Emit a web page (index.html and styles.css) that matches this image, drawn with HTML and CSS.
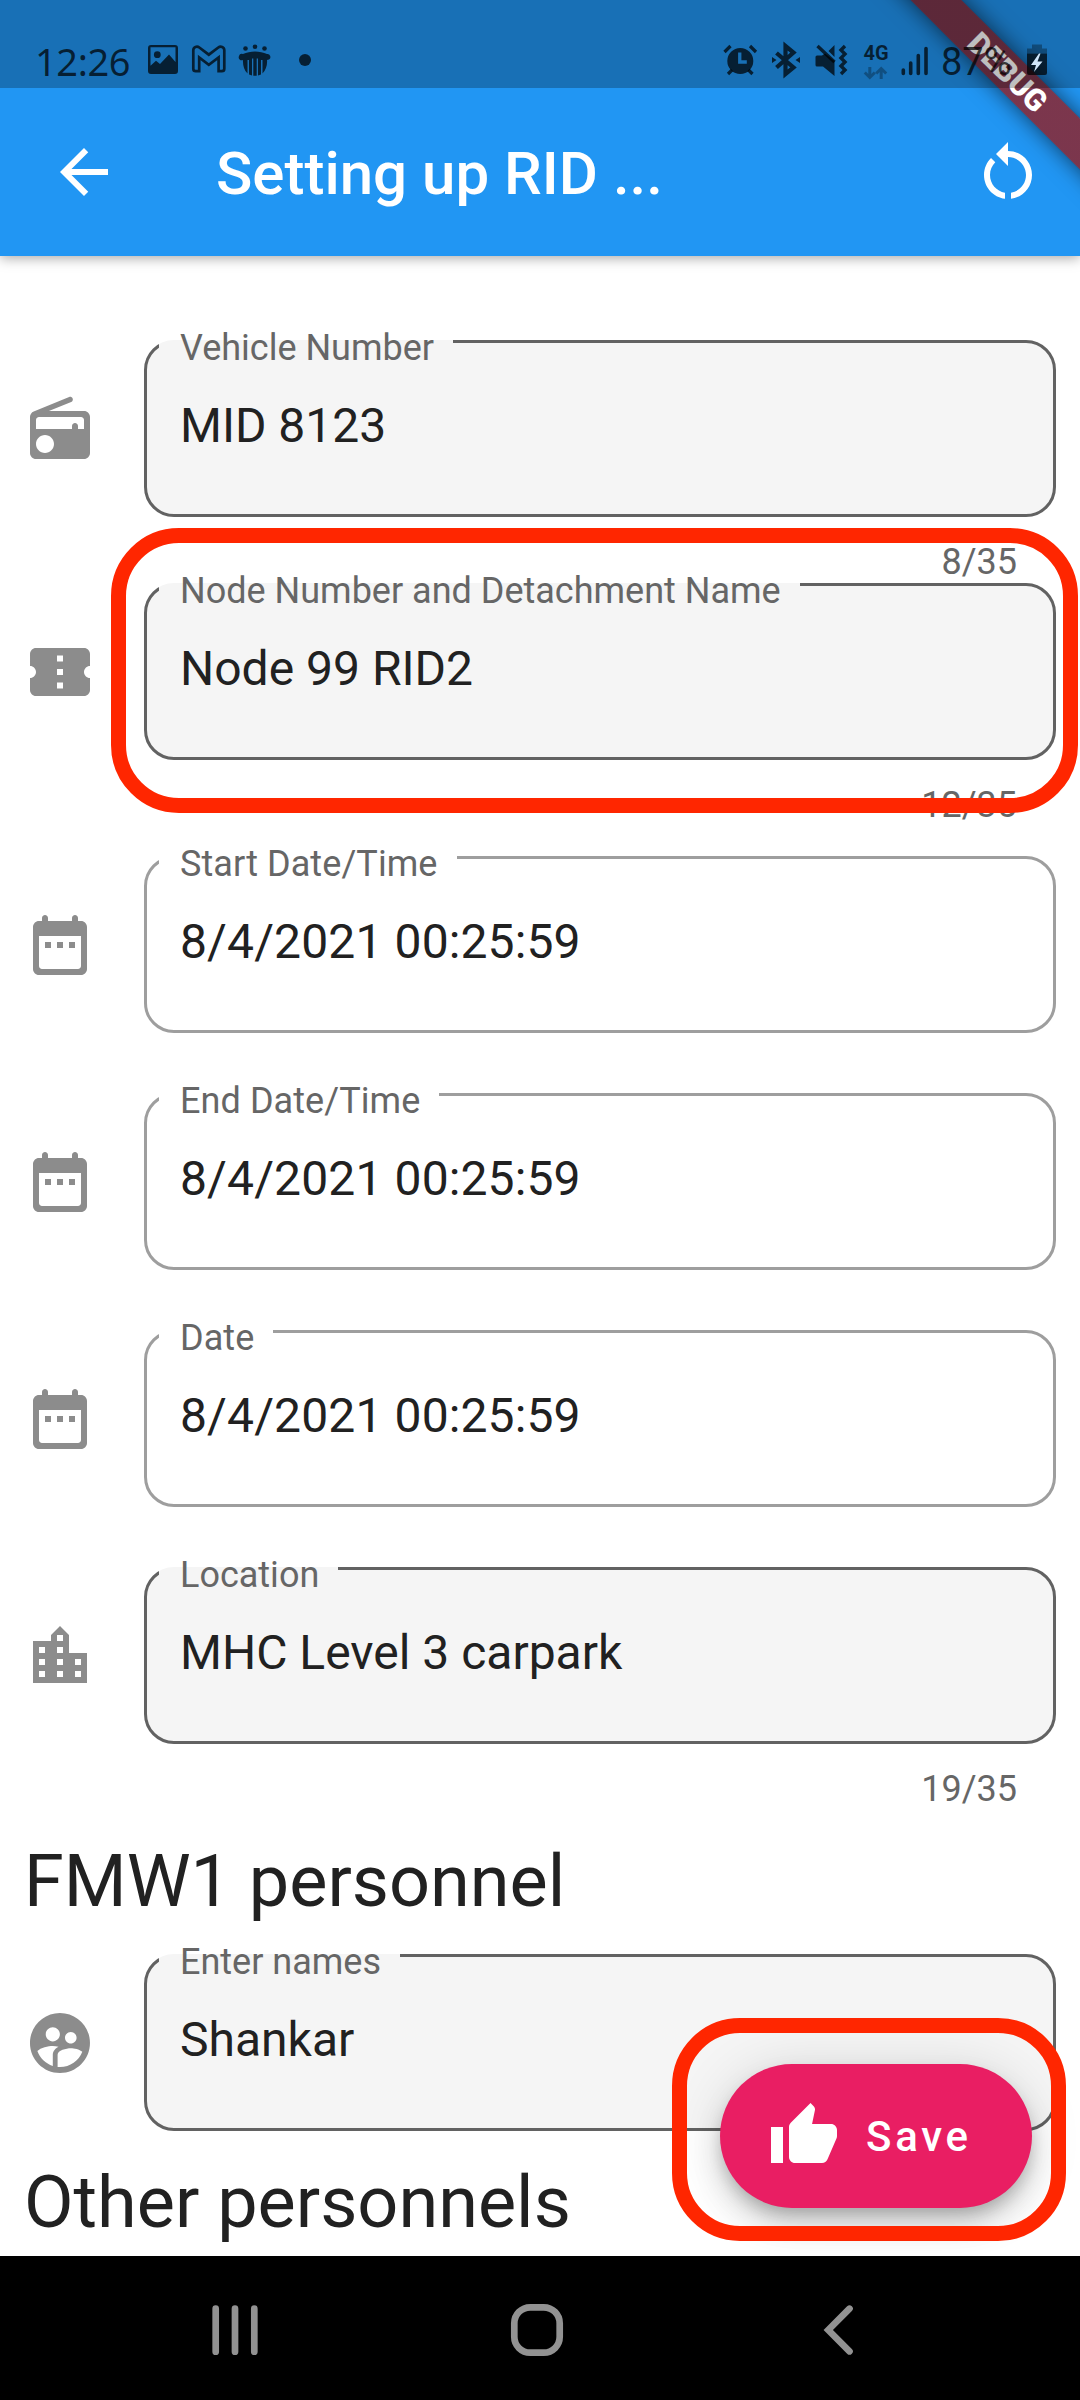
FILE: index.html
```html
<!DOCTYPE html>
<html lang="en">
<head>
<meta charset="utf-8">
<title>Setting up RID</title>
<link rel="stylesheet" href="styles.css">
</head>
<body>
<div class="screen">
  <header class="appbar">
    <svg class="icon" viewBox="0 0 24 24"><path d="M20 11H7.83l5.59-5.59L12 4l-8 8 8 8 1.41-1.41L7.83 13H20v-2z"/></svg>
    <h1 class="appbar-title">Setting up RID ...</h1>
    <svg class="icon" viewBox="0 0 24 24"><path d="M12 5V2L8 6l4 4V7c3.31 0 6 2.69 6 6 0 2.97-2.17 5.43-5 5.91v2.02c3.95-.49 7-3.85 7-7.93 0-4.42-3.58-8-8-8zm-6 8c0-1.65.67-3.15 1.76-4.24L6.34 7.34C4.9 8.79 4 10.79 4 13c0 4.08 3.05 7.44 7 7.93v-2.02c-2.83-.48-5-2.94-5-5.91z"/></svg>
  </header>

  <main class="form">
    <div class="row row-counted">
      <svg class="icon" viewBox="0 0 24 24"><path d="M3.24 6.15C2.51 6.43 2 7.17 2 8v12c0 1.1.89 2 2 2h16c1.1 0 2-.9 2-2V8c0-1.1-.9-2-2-2H8.3l7.43-3c.46-.19.68-.71.49-1.17-.19-.46-.71-.68-1.17-.49L3.24 6.15zM7 20c-1.66 0-3-1.34-3-3s1.34-3 3-3 3 1.34 3 3-1.34 3-3 3zm13-8h-2v-1c0-.55-.45-1-1-1s-1 .45-1 1v1H4V9c0-.55.45-1 1-1h14c.55 0 1 .45 1 1v3z"/></svg>
      <div class="field">
        <fieldset class="box filled"><legend>Vehicle Number</legend><div class="value">MID 8123</div></fieldset>
        <div class="counter">8/35</div>
      </div>
    </div>
    <div class="row row-counted-last">
      <svg class="icon" viewBox="0 0 24 24"><path d="M22 10V6c0-1.11-.9-2-2-2H4c-1.1 0-1.99.89-1.99 2v4c1.1 0 1.99.9 1.99 2s-.89 2-2 2v4c0 1.1.9 2 2 2h16c1.1 0 2-.9 2-2v-4c-1.1 0-2-.9-2-2s.9-2 2-2zm-9 7.5h-2v-2h2v2zm0-4.5h-2v-2h2v2zm0-4.5h-2v-2h2v2z"/></svg>
      <div class="field">
        <fieldset class="box filled"><legend>Node Number and Detachment Name</legend><div class="value">Node 99 RID2</div></fieldset>
        <div class="counter">12/35</div>
      </div>
    </div>
    <div class="row row-date">
      <svg class="icon" viewBox="0 0 24 24"><path fill-rule="evenodd" d="M19 4h-1V3c0-.55-.45-1-1-1s-1 .45-1 1v1H8V3c0-.55-.45-1-1-1s-1 .45-1 1v1H5c-1.1 0-2 .9-2 2v14c0 1.1.9 2 2 2h14c1.1 0 2-.9 2-2V6c0-1.1-.9-2-2-2zm0 15c0 .55-.45 1-1 1H6c-.55 0-1-.45-1-1V9h14v10zM7 11h2v2H7zm4 0h2v2h-2zm4 0h2v2h-2z"/></svg>
      <div class="field"><fieldset class="box"><legend>Start Date/Time</legend><div class="value">8/4/2021 00:25:59</div></fieldset></div>
    </div>
    <div class="row row-date">
      <svg class="icon" viewBox="0 0 24 24"><path fill-rule="evenodd" d="M19 4h-1V3c0-.55-.45-1-1-1s-1 .45-1 1v1H8V3c0-.55-.45-1-1-1s-1 .45-1 1v1H5c-1.1 0-2 .9-2 2v14c0 1.1.9 2 2 2h14c1.1 0 2-.9 2-2V6c0-1.1-.9-2-2-2zm0 15c0 .55-.45 1-1 1H6c-.55 0-1-.45-1-1V9h14v10zM7 11h2v2H7zm4 0h2v2h-2zm4 0h2v2h-2z"/></svg>
      <div class="field"><fieldset class="box"><legend>End Date/Time</legend><div class="value">8/4/2021 00:25:59</div></fieldset></div>
    </div>
    <div class="row row-date">
      <svg class="icon" viewBox="0 0 24 24"><path fill-rule="evenodd" d="M19 4h-1V3c0-.55-.45-1-1-1s-1 .45-1 1v1H8V3c0-.55-.45-1-1-1s-1 .45-1 1v1H5c-1.1 0-2 .9-2 2v14c0 1.1.9 2 2 2h14c1.1 0 2-.9 2-2V6c0-1.1-.9-2-2-2zm0 15c0 .55-.45 1-1 1H6c-.55 0-1-.45-1-1V9h14v10zM7 11h2v2H7zm4 0h2v2h-2zm4 0h2v2h-2z"/></svg>
      <div class="field"><fieldset class="box"><legend>Date</legend><div class="value">8/4/2021 00:25:59</div></fieldset></div>
    </div>
    <div class="row row-location">
      <svg class="icon" viewBox="0 0 24 24"><path d="M15 11V5l-3-3-3 3v2H3v14h18V11h-6zm-8 8H5v-2h2v2zm0-4H5v-2h2v2zm0-4H5V9h2v2zm6 8h-2v-2h2v2zm0-4h-2v-2h2v2zm0-4h-2V9h2v2zm0-4h-2V5h2v2zm6 12h-2v-2h2v2zm0-4h-2v-2h2v2z"/></svg>
      <div class="field">
        <fieldset class="box filled"><legend>Location</legend><div class="value">MHC Level 3 carpark</div></fieldset>
        <div class="counter">19/35</div>
      </div>
    </div>
    <h2 class="section">FMW1 personnel</h2>
    <div class="row row-names">
      <svg class="icon" viewBox="0 0 24 24"><path d="M11.99 2c-5.52 0-10 4.48-10 10s4.48 10 10 10 10-4.48 10-10-4.48-10-10-10zm3.61 6.34c1.07 0 1.93.86 1.93 1.93 0 1.07-.86 1.93-1.93 1.93-1.07 0-1.93-.86-1.93-1.93-.01-1.07.86-1.93 1.93-1.93zm-6-1.58c1.3 0 2.36 1.06 2.36 2.36 0 1.3-1.06 2.36-2.36 2.36s-2.36-1.06-2.36-2.36c0-1.31 1.05-2.36 2.36-2.36zm0 9.13v3.75c-2.4-.75-4.3-2.6-5.14-4.96 1.05-1.12 3.67-1.69 5.14-1.69.53 0 1.2.08 1.9.22-1.64.87-1.9 2.02-1.9 2.68zM11.99 20c-.27 0-.53-.01-.79-.04v-4.07c0-1.42 2.94-2.13 4.4-2.13 1.07 0 2.92.39 3.84 1.15-1.17 2.97-4.06 5.09-7.45 5.09z"/></svg>
      <div class="field"><fieldset class="box filled"><legend>Enter names</legend><div class="value">Shankar</div></fieldset></div>
    </div>
    <h2 class="section">Other personnels</h2>
  </main>

  <nav class="navbar">
    <svg class="nav-recents" viewBox="0 0 52 60"><path d="M6.7 8.7v43M26 8.7v43M45.3 8.7v43"/></svg>
    <svg class="nav-home" viewBox="0 0 60 60"><rect x="7.3" y="7.3" width="45.4" height="45.4" rx="16"/></svg>
    <svg class="nav-back" viewBox="0 0 40 60"><path d="M30.5 8.7 9.3 30l21.2 21.3"/></svg>
  </nav>

  <button class="fab">
    <svg class="icon" viewBox="0 0 24 24"><path d="M1 21h4V9H1v12zm22-11c0-1.1-.9-2-2-2h-6.31l.95-4.57.03-.32c0-.41-.17-.79-.44-1.06L14.17 1 7.59 7.59C7.22 7.95 7 8.45 7 9v10c0 1.1.9 2 2 2h9c.83 0 1.54-.5 1.84-1.22l3.02-7.05c.09-.23.14-.47.14-.73v-2z"/></svg>
    <span>Save</span>
  </button>

  <div class="ribbon-corner"><div class="ribbon">DEBUG</div></div>

  <div class="statusbar">
    <span class="time">12:26</span>
    <svg width="45" height="50" viewBox="140 36 45 50"><path fill-rule="evenodd" d="M151 45h24a3 3 0 0 1 3 3v23a3 3 0 0 1-3 3h-24a3 3 0 0 1-3-3V48a3 3 0 0 1 3-3zm-.5 2.300v18.500l5.500-5 4 3.200 9-9.500 6.500 7.500V47.300z"/><circle cx="157.300" cy="54.700" r="3.400"/></svg>
    <svg class="line" width="47" height="50" viewBox="185 36 47 50"><path stroke-width="2.700" d="M193.300 50.200v18.500q0 2.500 2.500 2.500h3.400V57.500l9.600 7.400 9.800-7.400v13.700h3.200q2.500 0 2.500-2.500V50.200c0-3.400-3.800-4.400-6-2.700l-9.500 7.200-9.500-7.200c-2.200-1.700-6-.7-6 2.700z"/></svg>
    <svg width="46" height="50" viewBox="232 36 46 50"><circle cx="245.500" cy="48.500" r="2.300"/><circle cx="255" cy="46.800" r="2.300"/><circle cx="264.500" cy="48.500" r="2.300"/><path d="M239 56a3 3 0 0 1 4-2c7-3.500 17-3.500 24 0a3 3 0 0 1 2 5.500l-2 .5c.5 5-1 10-4.500 13.500V60h-1.500v14.500l-3 1V58.500h-1.300v17.300h-3.400V58.500H252v17l-3-1V60h-1.500v13.500C244 70 242.700 65 243 60a3 3 0 0 1-4-4z"/></svg>
    <svg width="42" height="50" viewBox="278 36 42 50"><circle cx="305" cy="60" r="6"/></svg>
    <svg class="status-end" width="44" height="50" viewBox="718 36 44 50"><path fill-rule="evenodd" d="M740.300 48a13 13 0 1 1 0 26 13 13 0 0 1 0-26zm-2.200 4.500v11.300h8.700v-3.600h-5.400v-7.700z"/><path class="stroke" stroke-width="3.200" d="m724.500 52 6-6m25.500 6-6-6M732 70l-4 4m20.500-4 4 4"/></svg>
    <svg width="46" height="50" viewBox="762 36 46 50"><path class="stroke" stroke-width="4.200" d="m776.500 53 17 14.500-8 6.500V46l8 6.500-17 15"/><path d="m772 57 4.500 3-4.500 3zM800 57l-4.500 3 4.500 3z"/></svg>
    <svg width="48" height="50" viewBox="808 36 48 50"><path d="M815.500 57q0-1.500 1.500-1.500h5l3-2L834.500 61v15L823 66.500h-6q-1.500 0-1.500-1.500zM828.500 51l6-6v12z"/><path class="stroke" stroke-width="3.400" d="m817.500 46 17 16M845 46l-4 4 4 4-4 4 4 4-4 4 4 4-4 4"/></svg>
    <span class="network"><b>4G</b><svg width="40" height="18" viewBox="0 0 40 18"><path d="M13.800 2v10m-5-4.500 5 5 5-5M25.200 14V4m-5 4.500 5-5 5 5"/></svg></span>
    <svg class="bars" width="40" height="50" viewBox="896 36 40 50"><path d="M903.300 70v3.500M910.700 63v10.500M918.300 55.500v18M926 48.500v25"/></svg>
    <span class="percent">87%</span>
    <svg width="32" height="50" viewBox="1022 36 32 50"><path opacity=".45" d="M1032 44.500h10v4h5v5h-20v-5h5z"/><path d="M1027 53.500h20V73q0 2-2 2h-16q-2 0-2-2z"/><path fill="#cfe6fa" d="m1039 53.500-8 11.500h5l-2 7 8.500-10.500h-5l3-8z"/></svg>
  </div>

  <div class="mark mark-node"></div>
  <div class="mark mark-save"></div>
</div>
</body>
</html>
```
FILE: styles.css
```css
* { box-sizing: border-box; }

body {
  margin: 0;
  background: #fff;
  font-family: Roboto, sans-serif;
  color: #212121;
}

.screen {
  position: relative;
  display: flex;
  flex-direction: column;
  width: 1080px;
  height: 2400px;
  overflow: hidden;
}

.icon {
  flex: none;
  width: 72px;
  height: 72px;
  fill: currentColor;
}

/* App bar */
.appbar {
  flex: none;
  display: flex;
  align-items: center;
  height: 256px;
  padding: 88px 36px 0 48px;
  background: #2196f3;
  color: #fff;
  box-shadow: 0 2px 12px rgba(0, 0, 0, .35);
}

.appbar-title {
  flex: 1;
  margin: 0 0 0 96px;
  padding-top: 3px;
  font-size: 60px;
  font-weight: 500;
  line-height: 84px;
}

/* Form */
.form {
  flex: 1;
  min-height: 0;
  padding: 84px 24px 0;
}

.row {
  display: flex;
  align-items: flex-start;
  gap: 48px;
  height: 237px;
}

.row-counted { height: 243px; }
.row-counted-last { height: 273px; }
.row-location { height: 264px; }
.row-names { height: 198px; }

.row .icon {
  margin-top: 52.5px;
  color: #8c8c8c;
}

.field {
  flex: 1;
  min-width: 0;
}

.box {
  height: 182px;
  margin: -5px 0 0;
  padding: 0 0 0 33px;
  border: 3px solid #9e9e9e;
  border-radius: 30px;
}

.filled {
  background: #f5f5f5;
  border-color: #626262;
}

/* The short legend cuts the outline; its text hangs below it */
.box legend {
  height: 13px;
  margin-left: -21px;
  padding: 0 19px 0 21px;
  font-size: 36px;
  line-height: 27px;
  white-space: nowrap;
  color: #666;
}

.value {
  padding-top: 50px;
  font-size: 48px;
  line-height: 56px;
}

.row-date .value { letter-spacing: .13px; }
.row-date legend { letter-spacing: .08px; }

.counter {
  padding: 24px 39px 0 0;
  font-size: 36px;
  line-height: 42px;
  text-align: right;
  color: #666;
}

.section {
  margin: 0;
  font-size: 72px;
  font-weight: 400;
  line-height: 84px;
  height: 123px;
  padding-top: 9px;
}

/* Save button */
.fab {
  position: absolute;
  right: 48px;
  top: 2064px;
  display: flex;
  align-items: center;
  gap: 26px;
  width: 312px;
  height: 144px;
  padding: 0 0 0 48px;
  border: 0;
  border-radius: 72px;
  background: #e91e63;
  color: #fff;
  font: 500 42px/48px Roboto, sans-serif;
  letter-spacing: 3.750px;
  box-shadow: 0 9px 15px -3px rgba(0, 0, 0, .2), 0 18px 30px rgba(0, 0, 0, .14), 0 3px 54px rgba(0, 0, 0, .12);
}

.fab span { padding-top: 1px; }

/* System navigation */
.navbar {
  position: relative;
  flex: none;
  display: flex;
  align-items: center;
  height: 144px;
  padding: 4px 0 0 209px;
  background: #000;
  fill: none;
  stroke: #929292;
  stroke-width: 6.700px;
  stroke-linecap: round;
}

.nav-recents { width: 52px; height: 60px; }
.nav-home { width: 60px; height: 60px; margin-left: 246px; }
.nav-back { width: 40px; height: 60px; margin-left: 252px; }

/* Debug ribbon */
.ribbon-corner {
  position: absolute;
  top: 0;
  right: 0;
  width: 240px;
  height: 240px;
  overflow: hidden;
}

.ribbon {
  position: absolute;
  top: 54px;
  left: -32px;
  width: 400px;
  height: 36px;
  transform: rotate(45deg);
  background: linear-gradient(rgba(183, 28, 28, .63), rgba(183, 28, 28, .63)), rgba(0, 0, 0, .34);
  box-shadow: 0 0 22px rgba(0, 0, 0, .6);
  color: #fff;
  font-size: 30.600px;
  font-weight: 900;
  line-height: 37px;
  text-align: center;
}

/* System status bar, over the app */
.statusbar {
  position: absolute;
  top: 0;
  left: 0;
  display: flex;
  width: 1080px;
  height: 88px;
  padding: 36px 26px 0 35px;
  background: rgba(0, 0, 0, .25);
  color: rgba(0, 0, 0, .72);
  fill: currentColor;
}

.statusbar svg { flex: none; }
.status-end { margin-left: auto; }
.line, .stroke { fill: none; stroke: currentColor; }

.time {
  width: 105px;
  font: 400 38px/50px "Noto Sans", sans-serif;
  letter-spacing: -.4px;
}

.network {
  display: flex;
  flex-direction: column;
  width: 40px;
  text-align: center;
  font-size: 20px;
  line-height: 24px;
  padding-top: 5px;
}

.network b { font-weight: 700; }

.network svg {
  fill: none;
  stroke: currentColor;
  stroke-width: 3px;
  opacity: .4;
}

.bars {
  fill: none;
  stroke: currentColor;
  stroke-width: 3.600px;
  stroke-linecap: round;
}

.percent {
  width: 86px;
  padding-left: 5px;
  font-size: 38px;
  line-height: 53px;
}

/* Highlight outlines */
.mark {
  position: absolute;
  border: 15.500px solid #ff2600;
  border-radius: 68px;
}

.mark-node {
  left: 111px;
  top: 528px;
  width: 967px;
  height: 285px;
}

.mark-save {
  left: 672px;
  top: 2018px;
  width: 394px;
  height: 223px;
}
```
